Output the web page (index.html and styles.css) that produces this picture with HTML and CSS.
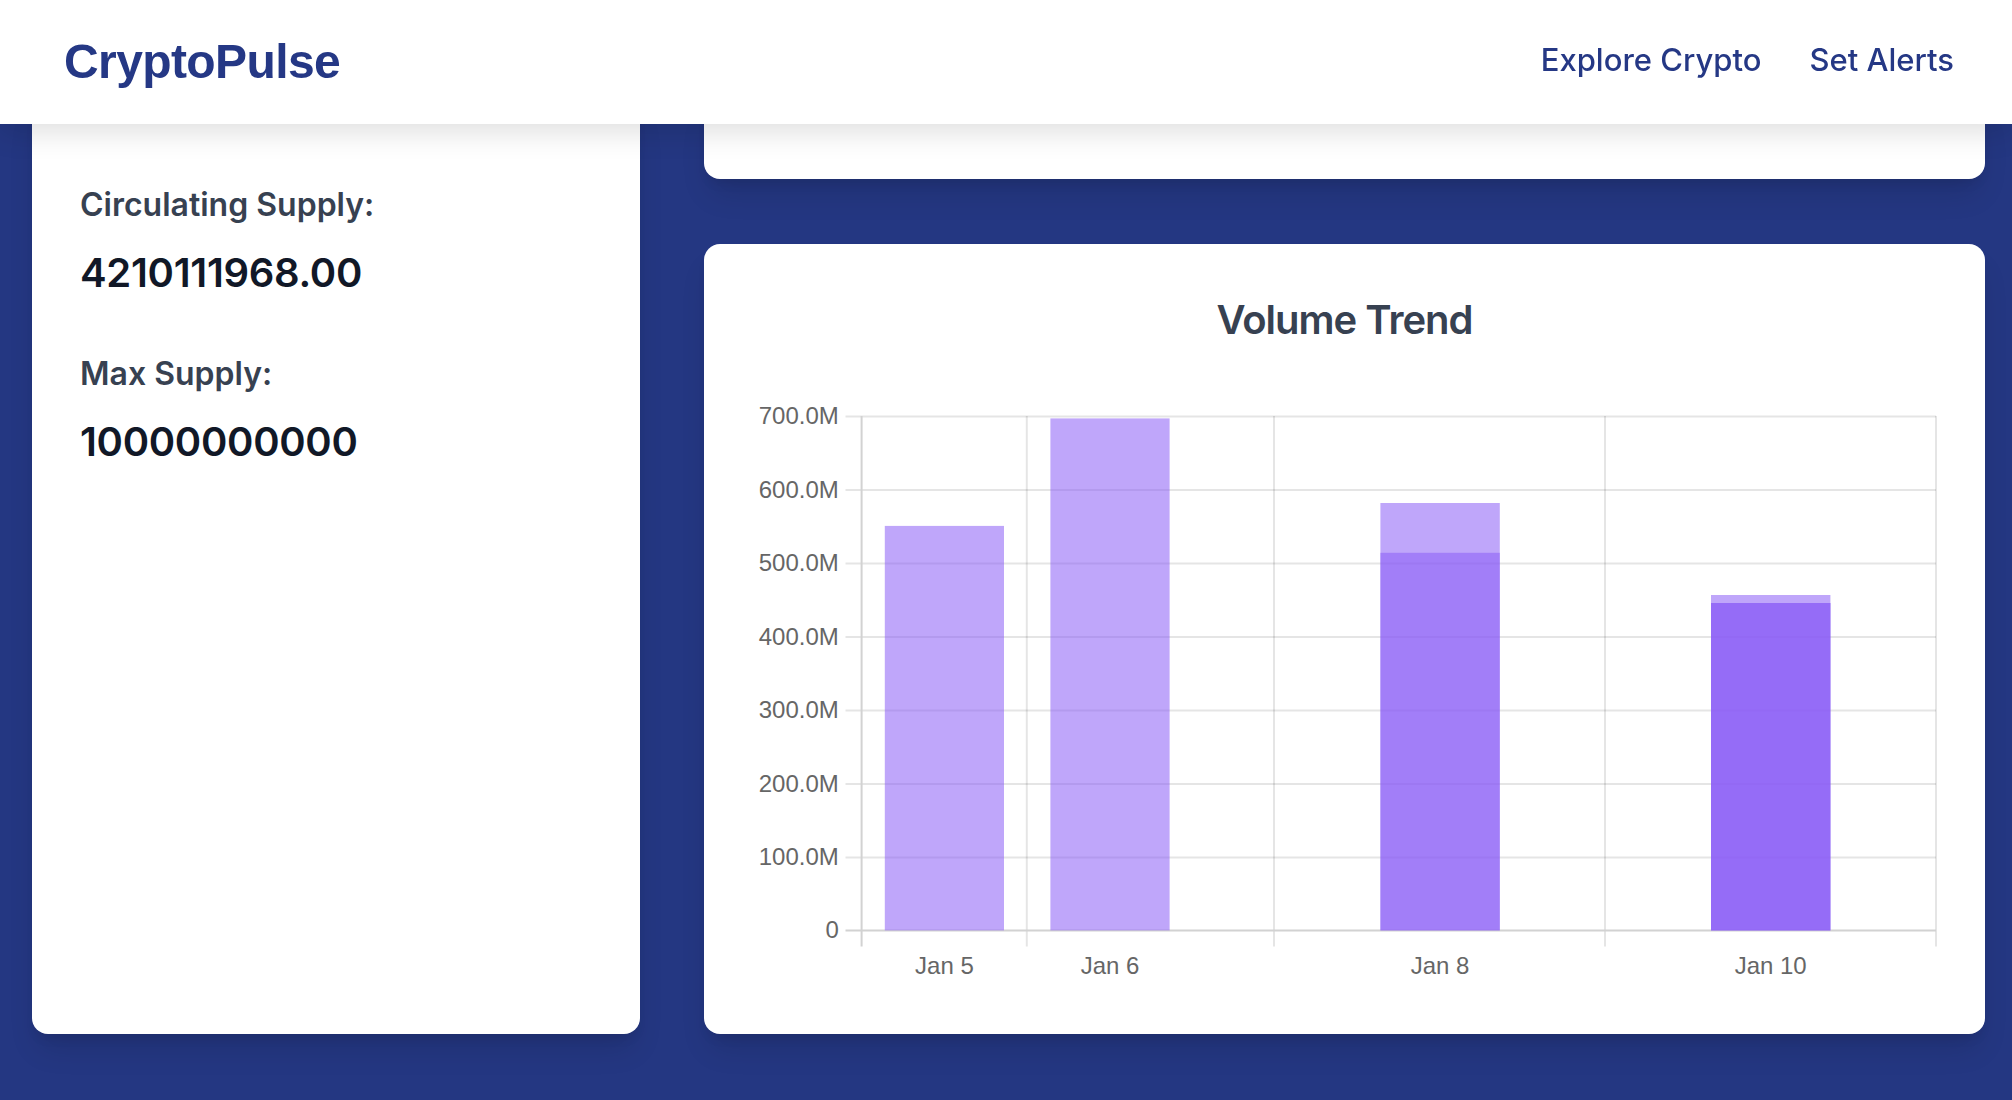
FILE: index.html
```html
<!DOCTYPE html>
<html lang="en">
<head>
<meta charset="utf-8">
<title>CryptoPulse</title>
<link rel="stylesheet" href="styles.css">
</head>
<body>
<header class="site-header">
  <a class="logo" href="#">CryptoPulse</a>
  <nav class="nav">
    <a href="#">Explore Crypto</a>
    <a href="#">Set Alerts</a>
  </nav>
</header>
<main class="layout">
  <section class="card stats-card">
    <div class="stat">
      <h3 class="stat-label">Circulating Supply:</h3>
      <p class="stat-value">4210111968.00</p>
    </div>
    <div class="stat">
      <h3 class="stat-label">Max Supply:</h3>
      <p class="stat-value">10000000000</p>
    </div>
  </section>
  <div class="right-col">
    <section class="card top-card"></section>
    <section class="card chart-card">
      <h2 class="chart-title">Volume Trend</h2>
      <svg class="chart" width="1185" height="606" viewBox="0 0 1185 606">
        <g class="grid">
          <line x1="93.5" x2="1184" y1="36.5" y2="36.5"/>
          <line x1="93.5" x2="1184" y1="110" y2="110"/>
          <line x1="93.5" x2="1184" y1="183.5" y2="183.5"/>
          <line x1="93.5" x2="1184" y1="257" y2="257"/>
          <line x1="93.5" x2="1184" y1="330.5" y2="330.5"/>
          <line x1="93.5" x2="1184" y1="404" y2="404"/>
          <line x1="93.5" x2="1184" y1="477.5" y2="477.5"/>
          <line x1="274.8" x2="274.8" y1="36" y2="566.5"/>
          <line x1="522" x2="522" y1="36" y2="566.5"/>
          <line x1="853" x2="853" y1="36" y2="566.5"/>
          <line x1="1184" x2="1184" y1="36" y2="566.5"/>
        </g>
        <g class="axis">
          <line x1="109.6" x2="109.6" y1="36" y2="566.5"/>
          <line x1="93.5" x2="1184" y1="550.5" y2="550.5"/>
        </g>
        <g class="bars">
          <rect x="132.8" y="145.9" width="119.2" height="404.5"/>
          <rect x="298.4" y="38.4" width="119.2" height="512"/>
          <rect x="628.4" y="123" width="119.4" height="427.4"/>
          <rect x="628.4" y="172.8" width="119.4" height="377.6"/>
          <rect x="959" y="215" width="119.4" height="335.4"/>
          <rect x="959" y="223" width="119.4" height="327.4"/>
          <rect x="959" y="223" width="119.4" height="327.4"/>
        </g>
        <g class="y-labels">
          <text x="86.8" y="44">700.0M</text>
          <text x="86.8" y="117.5">600.0M</text>
          <text x="86.8" y="191">500.0M</text>
          <text x="86.8" y="264.5">400.0M</text>
          <text x="86.8" y="338">300.0M</text>
          <text x="86.8" y="411.5">200.0M</text>
          <text x="86.8" y="485">100.0M</text>
          <text x="86.8" y="558">0</text>
        </g>
        <g class="x-labels">
          <text x="192.4" y="594">Jan 5</text>
          <text x="358" y="594">Jan 6</text>
          <text x="688" y="594">Jan 8</text>
          <text x="1018.7" y="594">Jan 10</text>
        </g>
      </svg>
    </section>
  </div>
</main>
</body>
</html>
```

FILE: styles.css
```css
* {
  box-sizing: border-box;
}

html, body {
  margin: 0;
  padding: 0;
}

body {
  background: #243782;
  font-family: Inter, "Noto Sans", "Liberation Sans", sans-serif;
  height: 1100px;
  overflow: hidden;
}

.site-header {
  position: fixed;
  top: 0;
  left: 0;
  right: 0;
  height: 124px;
  z-index: 10;
  background: #ffffff;
  display: flex;
  align-items: center;
  justify-content: space-between;
  padding: 0 58px 0 64px;
  box-shadow: 0 8px 28px rgba(0, 0, 0, 0.13);
}

.logo {
  font-family: "Liberation Sans", Arial, sans-serif;
  font-weight: 700;
  font-size: 48px;
  letter-spacing: -0.6px;
  color: #253885;
  text-decoration: none;
  padding-bottom: 2px;
}

.nav {
  display: flex;
  gap: 48px;
  padding-bottom: 5px;
}

.nav a {
  font-size: 31px;
  font-weight: 500;
  color: #253885;
  text-decoration: none;
}

.layout {
  display: grid;
  grid-template-columns: 608px 1fr;
  gap: 64px;
  padding: 96px 27px 66px 32px;
}

.card {
  background: #ffffff;
  border-radius: 16px;
  box-shadow: 0 20px 30px -6px rgba(0, 0, 0, 0.12), 0 8px 12px -4px rgba(0, 0, 0, 0.08);
}

.stats-card {
  padding: 85px 48px 48px;
}

.stat + .stat {
  margin-top: 51px;
}

.stat-label {
  margin: 0 0 18px;
  font-size: 32px;
  line-height: 48px;
  font-weight: 600;
  color: #374151;
}

.stat-value {
  margin: 0;
  font-size: 40px;
  line-height: 52px;
  font-weight: 600;
  letter-spacing: -0.3px;
  color: #111827;
}

.right-col {
  display: flex;
  flex-direction: column;
  gap: 65px;
}

.top-card {
  height: 83px;
}

.chart-card {
  height: 790px;
  padding: 48px;
}

.chart-title {
  margin: 0 0 32px;
  text-align: center;
  font-size: 40px;
  line-height: 56px;
  font-weight: 600;
  letter-spacing: -1px;
  color: #374151;
}

.chart {
  display: block;
}

.grid line {
  stroke: rgba(0, 0, 0, 0.1);
  stroke-width: 2;
}

.axis line {
  stroke: #d2d2d2;
  stroke-width: 2;
}

.bars rect {
  fill: rgba(139, 92, 246, 0.55);
}

.chart text {
  font-family: "Liberation Sans", Arial, sans-serif;
  font-size: 24px;
  fill: #666666;
}

.y-labels text {
  text-anchor: end;
}

.x-labels text {
  text-anchor: middle;
}
```
